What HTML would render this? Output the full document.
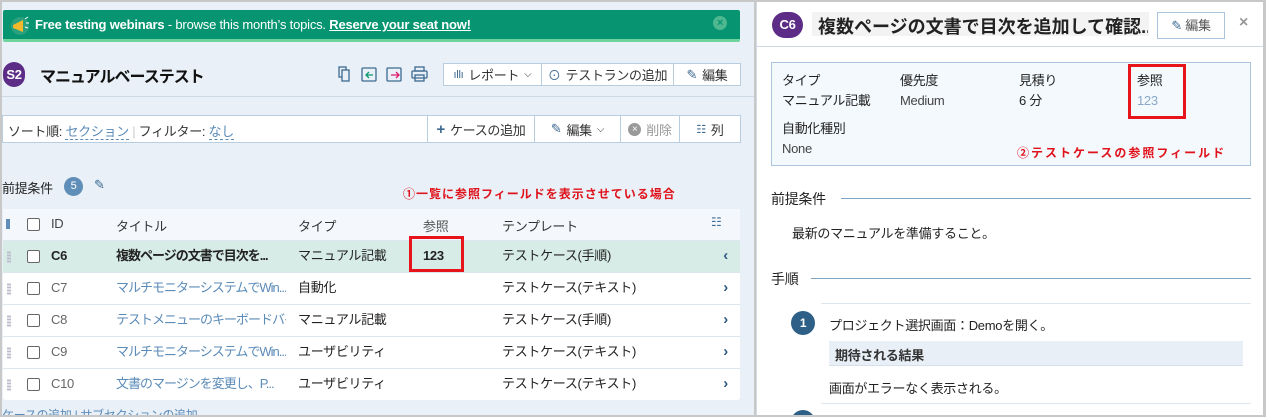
<!DOCTYPE html>
<html><head><meta charset="utf-8"><style>
*{box-sizing:border-box;margin:0;padding:0}
body{width:1266px;height:417px;overflow:hidden;position:relative;background:#c8c8c8;font-family:"Liberation Sans","Noto Sans CJK JP",sans-serif;font-size:13px;color:#222;letter-spacing:-0.3px}
.a{position:absolute;white-space:nowrap}
#left{position:absolute;left:2px;top:2px;width:752px;height:413px;background:#e9f0f7;overflow:hidden}
#right{position:absolute;left:756px;top:2px;width:507px;height:413px;background:#fff;overflow:hidden;border-left:1px solid #d0dbe5}
.btn{position:absolute;top:0;height:100%;background:#fff;border-right:1px solid #b8cde0;display:flex;align-items:center;justify-content:center;gap:5px;color:#333}
.row{position:absolute;left:1px;width:737px;height:32px;background:#fff;border-top:1px solid #dde5ee}
.row .a{top:5px;line-height:20px}
.t{width:170px;overflow:hidden}
.cb{position:absolute;left:24px;top:9px;width:13px;height:13px;border:1px solid #666;border-radius:2px;background:#fff}
.dots{position:absolute;left:4px;top:10px;width:4px;height:12px;background:radial-gradient(circle,#bbc 1px,transparent 1.2px) 0 0/2px 3px}
.lnk{color:#5b8bb8}
.chev{position:absolute;right:12px;color:#2f5a80;font-weight:bold;font-size:15px}
</style></head><body>
<div id="left">
  <div class="a" style="left:1px;top:8px;width:737px;height:32px;background:#069570;border-bottom:3px solid #6fd39e;border-radius:2px"></div>
  <svg class="a" style="left:7px;top:12px" width="24" height="22"><circle cx="11" cy="12" r="9" fill="#2aa07e"/><path d="M4 11 L14 6 L14 18 L4 14Z" fill="#f4b92a"/><path d="M16 5l3-2M17 9h3M16 13l3 1" stroke="#fff" stroke-width="1"/></svg>
  <div class="a" style="left:33px;top:15px;color:#fff;font-size:13px;letter-spacing:-0.2px"><b>Free testing webinars</b> - browse this month’s topics. <b style="text-decoration:underline">Reserve your seat now!</b></div>
  <div class="a" style="left:711px;top:14px;width:14px;height:14px;border-radius:50%;background:#4fb891;color:#069570;font-size:11px;line-height:14px;text-align:center;font-weight:bold">×</div>

  <div class="a" style="left:1px;top:60px;width:22px;height:25px;border-radius:12px;background:#5c2c86;color:#fff;font-weight:bold;font-size:13px;line-height:25px;text-align:center">S2</div>
  <div class="a" style="left:38px;top:61px;font-size:16px;color:#111;letter-spacing:-1px;font-weight:bold">マニュアルベーステスト</div>
  <svg class="a" style="left:335px;top:63px" width="96" height="18" fill="none" stroke="#3d6a90" stroke-width="1.3">
    <rect x="2" y="2" width="7" height="10"/><rect x="5" y="5" width="7" height="11" fill="#e9f0f7"/>
    <rect x="25" y="3" width="14" height="13" rx="1"/><path d="M36 10h-7m3-3l-3 3 3 3" stroke="#0a9a6c"/>
    <rect x="50" y="3" width="14" height="13" rx="1"/><path d="M54 10h8m-3-3l3 3-3 3" stroke="#e0186c"/>
    <rect x="78" y="2" width="9" height="4"/><rect x="75" y="6" width="15" height="7" rx="1"/><rect x="78" y="10" width="9" height="6"/>
  </svg>
  <div class="a" style="left:441px;top:61px;width:298px;height:23px;border:1px solid #b8cde0;background:#fff">
    <div class="btn" style="left:0;width:98px"><span style="color:#3d6a90;font-size:11px">ıllı</span>レポート <span style="font-size:10px">⌵</span></div>
    <div class="btn" style="left:98px;width:132px"><span style="color:#3d6a90">⊙</span>テストランの追加</div>
    <div class="btn" style="left:230px;width:66px;border:none"><span style="color:#3d6a90">✎</span>編集</div>
  </div>
  <div class="a" style="left:0;top:94px;width:752px;height:1px;background:#cdd9e4"></div>

  <div class="a" style="left:0;top:113px;width:739px;height:28px;background:#fff;border:1px solid #b8cde0">
    <div class="a" style="left:5px;top:5px;color:#333">ソート順: <span class="lnk" style="border-bottom:1px dashed #5b8bb8">セクション</span> <span style="color:#ccc">|</span> フィルター: <span class="lnk" style="border-bottom:1px dashed #5b8bb8">なし</span></div>
    <div class="btn" style="left:424px;width:1px;padding:0;background:#b8cde0"></div>
    <div class="btn" style="left:425px;width:107px"><b style="color:#3d6a90;font-size:15px">+</b>ケースの追加</div>
    <div class="btn" style="left:532px;width:86px"><span style="color:#3d6a90">✎</span>編集 <span style="font-size:10px">⌵</span></div>
    <div class="btn" style="left:618px;width:59px;color:#999"><span style="display:inline-block;width:13px;height:13px;border-radius:50%;background:#999;color:#fff;font-size:10px;line-height:13px;text-align:center">×</span>削除</div>
    <div class="btn" style="left:677px;width:60px;border:none"><span style="color:#3d6a90;font-size:11px">☷</span>列</div>
  </div>

  <div class="a" style="left:0;top:176px;font-size:13px">前提条件</div>
  <div class="a" style="left:62px;top:175px;width:19px;height:19px;border-radius:50%;background:#5f8fb8;color:#fff;font-size:11px;line-height:19px;text-align:center">5</div>
  <div class="a" style="left:92px;top:175px;color:#3d6a90">✎</div>
  <div class="a" style="left:401px;top:183px;color:#e0121b;font-size:12px;font-weight:bold;letter-spacing:1px">①一覧に参照フィールドを表示させている場合</div>

  <div class="a" style="left:1px;top:207px;width:737px;height:31px;background:#f4f8fc"></div>
  <div class="a" style="left:4px;top:217px;width:4px;height:10px;background:#5f8fb8"></div>
  <div class="a" style="left:25px;top:216px;width:13px;height:13px;border:1px solid #666;border-radius:2px;background:#fff"></div>
  <div class="a" style="left:49px;top:214px;color:#444">ID</div>
  <div class="a" style="left:114px;top:214px;color:#333">タイトル</div>
  <div class="a" style="left:296px;top:214px;color:#333">タイプ</div>
  <div class="a" style="left:421px;top:214px;color:#555">参照</div>
  <div class="a" style="left:500px;top:214px;color:#333">テンプレート</div>
  <div class="a" style="left:709px;top:213px;color:#3d6a90;font-size:12px">☷</div>

  <div class="row" style="top:238px;background:#d7ece6"><div class="dots"></div><div class="cb"></div><div class="a" style="left:48px"><b>C6</b></div><div class="a t" style="left:113px;font-weight:bold;letter-spacing:-1px">複数ページの文書で目次を...</div><div class="a" style="left:295px">マニュアル記載</div><div class="a" style="left:420px;font-weight:bold">123</div><div class="a" style="left:499px">テストケース(手順)</div><div class="chev a">‹</div></div>
  <div class="row" style="top:270px"><div class="dots"></div><div class="cb"></div><div class="a" style="left:48px;color:#666">C7</div><div class="a lnk t" style="left:113px;letter-spacing:-1px">マルチモニターシステムでWin...</div><div class="a" style="left:295px">自動化</div><div class="a" style="left:499px">テストケース(テキスト)</div><div class="chev a">›</div></div>
  <div class="row" style="top:302px"><div class="dots"></div><div class="cb"></div><div class="a" style="left:48px;color:#666">C8</div><div class="a lnk t" style="left:113px;letter-spacing:-1px">テストメニューのキーボードバイ...</div><div class="a" style="left:295px">マニュアル記載</div><div class="a" style="left:499px">テストケース(手順)</div><div class="chev a">›</div></div>
  <div class="row" style="top:334px"><div class="dots"></div><div class="cb"></div><div class="a" style="left:48px;color:#666">C9</div><div class="a lnk t" style="left:113px;letter-spacing:-1px">マルチモニターシステムでWin...</div><div class="a" style="left:295px">ユーザビリティ</div><div class="a" style="left:499px">テストケース(テキスト)</div><div class="chev a">›</div></div>
  <div class="row" style="top:366px;border-radius:0 0 3px 3px"><div class="dots"></div><div class="cb"></div><div class="a" style="left:48px;color:#666">C10</div><div class="a lnk t" style="left:113px;letter-spacing:-1px">文書のマージンを変更し、P...</div><div class="a" style="left:295px">ユーザビリティ</div><div class="a" style="left:499px">テストケース(テキスト)</div><div class="chev a">›</div></div>
  <div class="a lnk" style="left:0;top:404px;font-size:12px">ケースの追加 | サブセクションの追加</div>
  <div class="a" style="left:407px;top:234px;width:55px;height:36px;border:3px solid #e8141c"></div>
</div>

<div id="right">
  <div class="a" style="left:15px;top:10px;width:31px;height:26px;border-radius:13px;background:#5c2c86;color:#fff;font-weight:bold;font-size:13px;line-height:26px;text-align:center">C6</div>
  <div class="a" style="left:55px;top:10px;width:337px;height:24px;background:#f3f3f3"></div>
  <div class="a" style="left:61px;top:11px;width:330px;overflow:hidden;font-size:18px;font-weight:bold;color:#222;letter-spacing:0">複数ページの文書で目次を追加して確認...</div>
  <div class="a" style="left:400px;top:10px;width:68px;height:27px;border:1px solid #a9c4dc;color:#555;line-height:25px;text-align:center;background:#fff"><span style="color:#3d6a90">✎</span> 編集</div>
  <div class="a" style="left:482px;top:12px;color:#999;font-size:16px;font-weight:bold">×</div>
  <div class="a" style="left:0;top:44px;width:507px;height:1px;background:#cdd9e4"></div>

  <div class="a" style="left:14px;top:60px;width:480px;height:104px;background:#f4f9fd;border:1px solid #a9c4dc"></div>
  <div class="a" style="left:25px;top:69px;line-height:20px">タイプ<br>マニュアル記載</div>
  <div class="a" style="left:143px;top:69px;line-height:20px">優先度<br><span style="color:#444">Medium</span></div>
  <div class="a" style="left:262px;top:69px;line-height:20px">見積り<br>6 分</div>
  <div class="a" style="left:380px;top:69px;line-height:20px">参照<br><span class="lnk" style="color:#8aa9c8">123</span></div>
  <div class="a" style="left:25px;top:117px;line-height:20px">自動化種別<br><span style="color:#444">None</span></div>
  <div class="a" style="left:260px;top:142px;color:#e0121b;font-size:12px;font-weight:bold;letter-spacing:2px">②テストケースの参照フィールド</div>
  <div class="a" style="left:371px;top:62px;width:58px;height:55px;border:3px solid #e8141c"></div>

  <div class="a" style="left:14px;top:187px;font-size:14px">前提条件</div>
  <div class="a" style="left:84px;top:196px;width:410px;height:1px;background:#7ea3c4"></div>
  <div class="a" style="left:35px;top:221px">最新のマニュアルを準備すること。</div>
  <div class="a" style="left:14px;top:267px;font-size:14px">手順</div>
  <div class="a" style="left:54px;top:276px;width:440px;height:1px;background:#7ea3c4"></div>
  <div class="a" style="left:64px;top:301px;width:430px;height:1px;background:#dde5ee"></div>
  <div class="a" style="left:34px;top:309px;width:24px;height:24px;border-radius:50%;background:#2e5f87;color:#fff;font-size:12px;font-weight:bold;line-height:24px;text-align:center">1</div>
  <div class="a" style="left:72px;top:313px">プロジェクト選択画面：Demoを開く。</div>
  <div class="a" style="left:72px;top:339px;width:414px;height:25px;background:#e9eff6;border-bottom:1px solid #d5e0ea"></div>
  <div class="a" style="left:78px;top:343px;font-weight:bold;color:#333">期待される結果</div>
  <div class="a" style="left:72px;top:376px">画面がエラーなく表示される。</div>
  <div class="a" style="left:64px;top:401px;width:430px;height:1px;background:#dde5ee"></div>
  <div class="a" style="left:34px;top:408px;width:24px;height:24px;border-radius:50%;background:#2e5f87"></div>
</div>
</body></html>
